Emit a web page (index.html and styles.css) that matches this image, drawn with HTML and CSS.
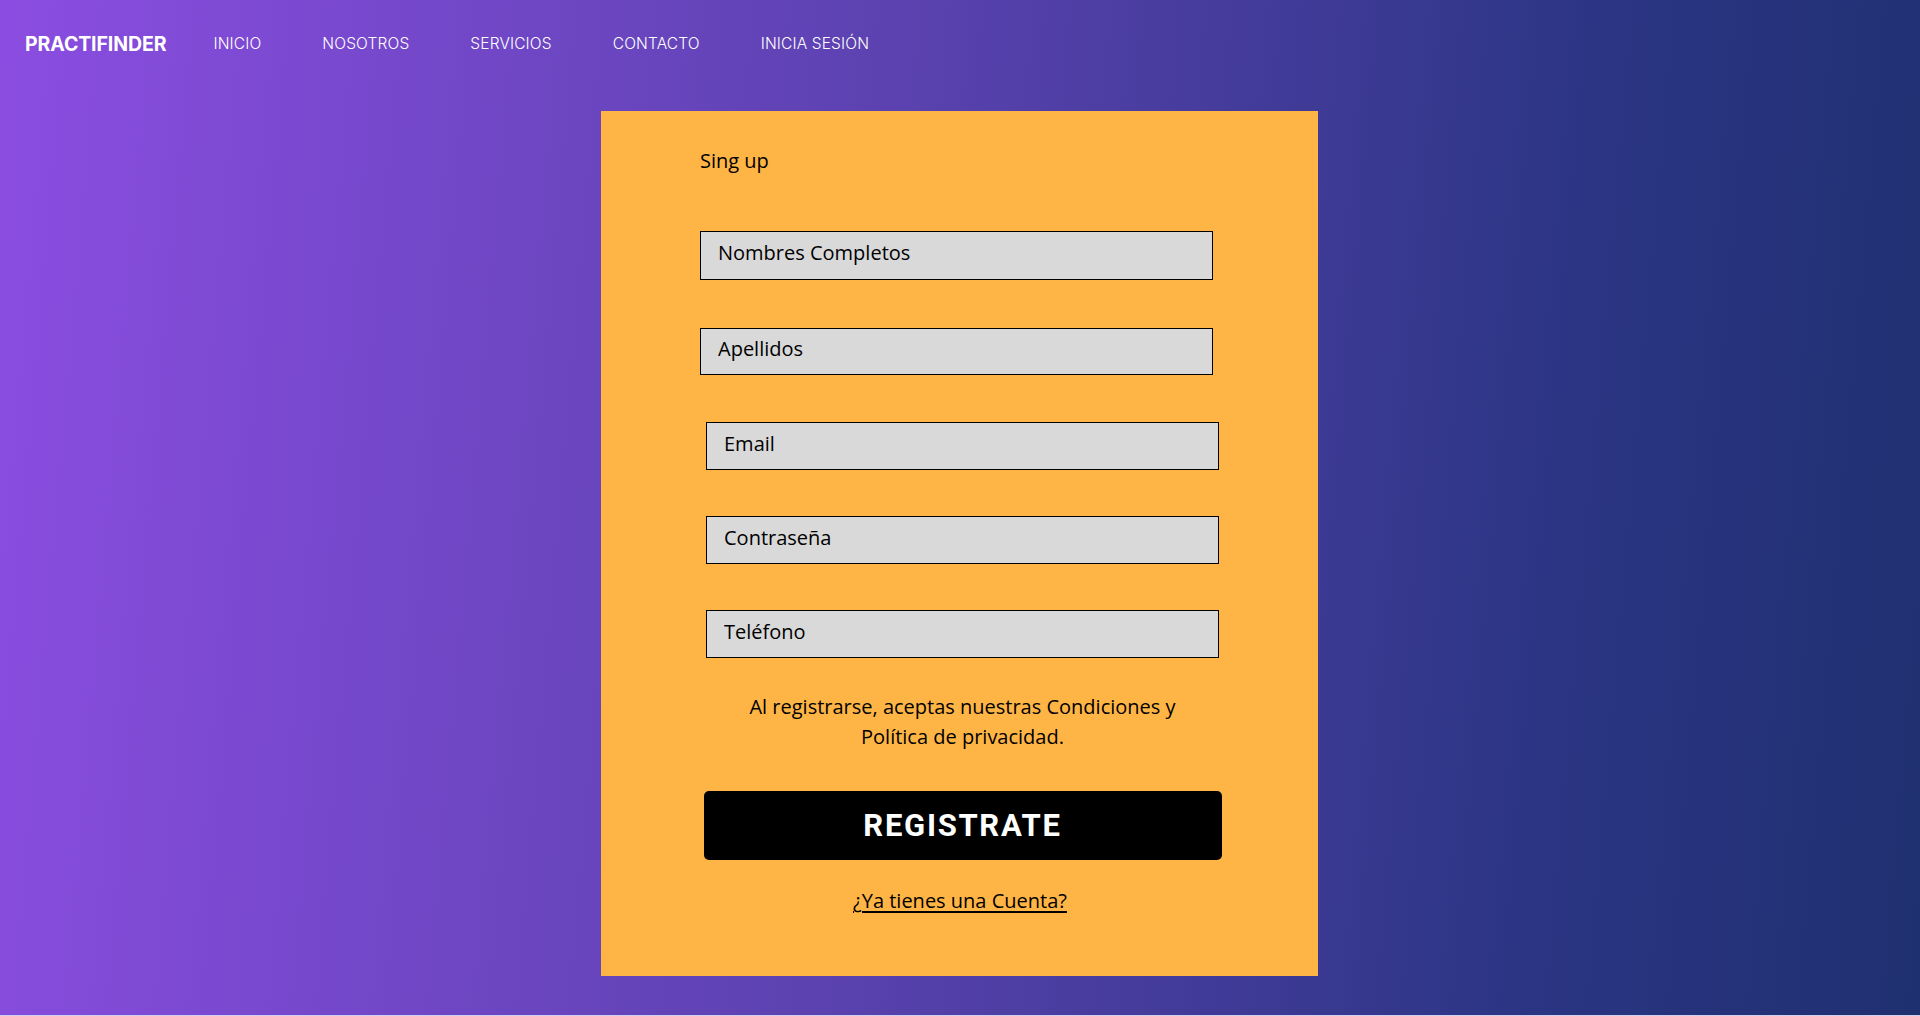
FILE: index.html
```html
<!DOCTYPE html>
<html lang="es">
<head>
<meta charset="utf-8">
<title>Practifinder - Sign up</title>
<link rel="stylesheet" href="styles.css">
</head>
<body>
<div class="page">
  <header class="topbar">
    <a class="brand" href="#">PRACTIFINDER</a>
    <nav class="menu">
      <a href="#">INICIO</a>
      <a href="#">NOSOTROS</a>
      <a href="#">SERVICIOS</a>
      <a href="#">CONTACTO</a>
      <a href="#">INICIA SESIÓN</a>
    </nav>
  </header>
  <main class="content">
    <section class="card">
      <h1 class="title">Sing up</h1>
      <form class="form">
        <input class="field field--a" type="text" placeholder="Nombres Completos">
        <input class="field field--b" type="text" placeholder="Apellidos">
        <input class="field field--shift" type="email" placeholder="Email">
        <input class="field field--shift" type="password" placeholder="Contraseña">
        <input class="field field--shift" type="tel" placeholder="Teléfono">
        <div class="footer">
          <p class="terms">Al registrarse, aceptas nuestras Condiciones y Política de privacidad.</p>
          <button class="submit" type="button">REGISTRATE</button>
          <a class="login" href="#">¿Ya tienes una Cuenta?</a>
        </div>
      </form>
    </section>
  </main>
</div>
</body>
</html>
```
FILE: styles.css
```css
html {
  background: #cfd0f2;
}
body {
  margin: 0;
}
.page {
  min-height: 1015px;
  background: linear-gradient(95deg, #8b4de1 0%, #5b42b0 45%, #2b3584 80%, #1f3070 100%);
  font-family: "Open Sans", "Liberation Sans", sans-serif;
  color: #000;
}
.topbar {
  height: 88px;
  display: flex;
  align-items: center;
  padding-left: 25px;
}
.brand {
  font-family: "Inter", "Liberation Sans", sans-serif;
  font-weight: 700;
  font-size: 19.5px;
  color: #fff;
  text-decoration: none;
  margin-right: 47px;
  letter-spacing: -0.1px;
}
.menu {
  display: flex;
  gap: 61px;
  margin-top: -2px;
}
.menu a {
  font-family: "Inter", "Liberation Sans", sans-serif;
  font-weight: 300;
  font-size: 15.5px;
  letter-spacing: 0.15px;
  color: #fff;
  text-decoration: none;
}
.content {
  display: flex;
  justify-content: center;
  padding-top: 23px;
}
.card {
  width: 717px;
  margin-left: -1px;
  box-sizing: border-box;
  background: #ffb545;
  padding: 36px 0 62px 99px;
}
.title {
  margin: 0;
  font-size: 20px;
  font-weight: 500;
  line-height: 27px;
}
.form {
  margin-top: 57px;
  display: flex;
  flex-direction: column;
  align-items: flex-start;
  gap: 46px;
}
.field {
  width: 513px;
  height: 48px;
  box-sizing: border-box;
  border: 1px solid #000;
  background: #d9d9d9;
  padding: 0 17px 6px;
  margin: 0;
  font-family: "Open Sans", "Liberation Sans", sans-serif;
  font-size: 20px;
  font-weight: 500;
  color: #000;
  outline: none;
}
.field::placeholder {
  color: #000;
  opacity: 1;
}
.field--a {
  height: 49px;
  margin-bottom: 2px;
}
.field--b {
  height: 47px;
  margin-bottom: 1px;
}
.field--shift {
  margin-left: 6px;
}
.footer {
  margin-left: 6px;
  margin-top: -12px;
  width: 513px;
  display: flex;
  flex-direction: column;
  align-items: center;
}
.terms {
  margin: 0;
  width: 450px;
  text-align: center;
  font-size: 20px;
  font-weight: 500;
  line-height: 30px;
}
.submit {
  margin-top: 39px;
  width: 518px;
  flex-shrink: 0;
  height: 69px;
  border: none;
  border-radius: 5px;
  background: #000;
  color: #fff;
  font-family: "Roboto", "Liberation Sans", sans-serif;
  font-weight: 700;
  font-size: 31px;
  letter-spacing: 1.7px;
  padding: 0;
  cursor: pointer;
}
.login {
  margin-top: 27px;
  font-size: 20px;
  font-weight: 500;
  line-height: 27px;
  color: #000;
  text-decoration: underline;
  text-underline-offset: 3px;
  margin-left: -5px;
}
```
